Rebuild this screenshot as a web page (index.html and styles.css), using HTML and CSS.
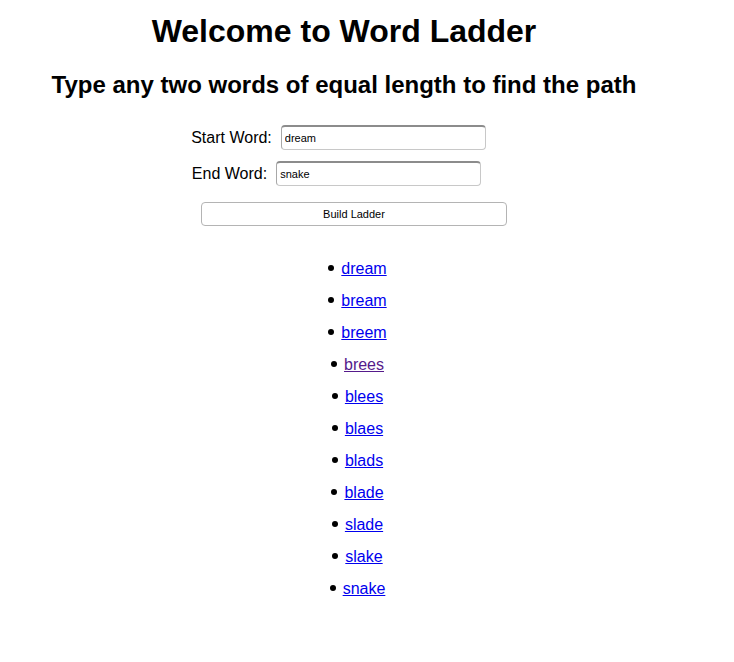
FILE: index.html
```html
<!DOCTYPE html>
<html>
<head>
<meta charset="utf-8">
<title>Word Ladder</title>
<link rel="stylesheet" href="styles.css">
</head>
<body>
<div class="page">
  <h1 class="title">Welcome to Word Ladder</h1>
  <h2 class="subtitle">Type any two words of equal length to find the path</h2>
  <form class="form">
    <div class="row row-start">
      <label class="label" for="start">Start Word:</label>
      <input class="field" id="start" type="text" value="dream">
    </div>
    <div class="row row-end">
      <label class="label" for="end">End Word:</label>
      <input class="field" id="end" type="text" value="snake">
    </div>
    <div class="row row-button">
      <button class="build" type="button">Build Ladder</button>
    </div>
  </form>
  <ul class="ladder">
    <li class="step"><a class="word" href="#dream">dream</a></li>
    <li class="step"><a class="word" href="#bream">bream</a></li>
    <li class="step"><a class="word" href="#breem">breem</a></li>
    <li class="step"><a class="word visited" href="#brees">brees</a></li>
    <li class="step"><a class="word" href="#blees">blees</a></li>
    <li class="step"><a class="word" href="#blaes">blaes</a></li>
    <li class="step"><a class="word" href="#blads">blads</a></li>
    <li class="step"><a class="word" href="#blade">blade</a></li>
    <li class="step"><a class="word" href="#slade">slade</a></li>
    <li class="step"><a class="word" href="#slake">slake</a></li>
    <li class="step"><a class="word" href="#snake">snake</a></li>
  </ul>
</div>
</body>
</html>
```
FILE: styles.css
```css
html, body {
  margin: 0;
  padding: 0;
  background: #ffffff;
}

body {
  font-family: "Liberation Sans", Arial, Helvetica, sans-serif;
  color: #000000;
}

.page {
  width: 672px;
  margin: 0 8px;
  padding-top: 13px;
  text-align: center;
}

.title {
  font-size: 32px;
  line-height: 37px;
  font-weight: bold;
  margin: 0;
}

.subtitle {
  font-size: 24px;
  line-height: 28px;
  font-weight: bold;
  margin: 21px 0 0;
}

.form {
  margin: 26px 0 0;
}

.row {
  display: flex;
  justify-content: center;
  align-items: center;
  gap: 9px;
}

.row-start {
  padding-right: 11px;
}

.row-end {
  margin-top: 11px;
  padding-right: 15px;
}

.row-button {
  margin-top: 16px;
  padding-left: 20px;
}

.label {
  font-size: 16px;
  line-height: 18px;
}

.field {
  box-sizing: border-box;
  width: 205px;
  height: 25px;
  margin: 0;
  padding: 0 3px;
  font-family: "Liberation Sans", Arial, Helvetica, sans-serif;
  font-size: 11px;
  color: #000;
  background: #fff;
  border: 1px solid #c8c8c8;
  border-top: 2px solid #8c8c8c;
  border-left-color: #a8a8a8;
  border-radius: 4px;
  outline: none;
}

.build {
  box-sizing: border-box;
  width: 306px;
  height: 24px;
  margin: 0;
  padding: 0;
  font-family: "Liberation Sans", Arial, Helvetica, sans-serif;
  font-size: 11px;
  color: #000;
  background: #fff;
  border: 1px solid #b4b4b4;
  border-radius: 4px;
}

.ladder {
  margin: 34px 0 0;
  padding: 0 0 0 27px;
  list-style: none;
  text-align: center;
}

.step {
  font-size: 16px;
  line-height: 18px;
  margin-top: 14px;
}

.step::before {
  content: "";
  display: inline-block;
  width: 6px;
  height: 6px;
  border-radius: 50%;
  background: #000;
  margin-right: 7px;
  vertical-align: 3px;
}

.word {
  color: #0000ee;
  text-decoration: underline;
}

.word.visited {
  color: #551a8b;
}
```
